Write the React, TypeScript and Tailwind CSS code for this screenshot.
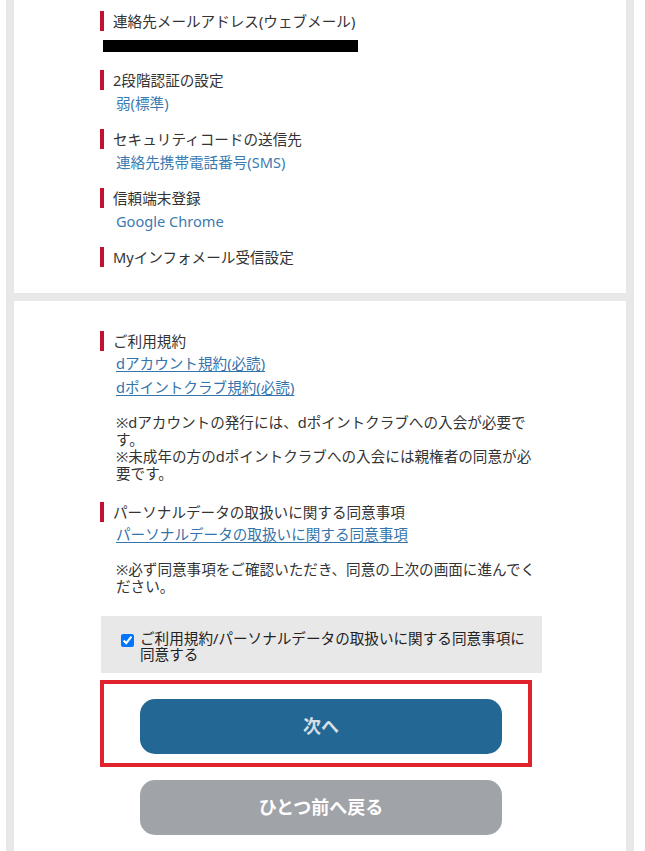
import React from 'react';

const heading = 'border-l-4 border-[#c3122f] pl-[9px] leading-[20px] text-[#333]';
const value = 'mt-[2px] pl-[16px] leading-[23px] text-[#3b7bb1]';
const link = 'text-[#3474ab] underline underline-offset-2';

export default function App() {
  return (
    <div className="h-[851px] overflow-hidden bg-white font-['Noto_Sans','Noto_Sans_CJK_JP',sans-serif] text-[14.6px] text-[#333]">
      <div className="mx-[6px] w-[628px] bg-[#e8e8e8] px-[8px] flex flex-col gap-[8px]">
        {/* Account settings */}
        <div className="bg-white pl-[86px] pt-[11px] pb-[26px] flex flex-col gap-[14px]">
          <div>
            <h3 className={heading}>連絡先メールアドレス(ウェブメール)</h3>
            <div className="mt-[9px] mb-[4px] ml-[3px] h-[12px] w-[255px] bg-black" />
          </div>
          <div>
            <h3 className={heading}>2段階認証の設定</h3>
            <p className={value}>弱(標準)</p>
          </div>
          <div>
            <h3 className={heading}>セキュリティコードの送信先</h3>
            <p className={value}>連絡先携帯電話番号(SMS)</p>
          </div>
          <div>
            <h3 className={heading}>信頼端末登録</h3>
            <p className={value}>Google Chrome</p>
          </div>
          <div>
            <h3 className={heading}>Myインフォメール受信設定</h3>
          </div>
        </div>

        {/* Terms */}
        <div className="bg-white pl-[86px] pt-[30px] pb-[40px]">
          <h3 className={heading}>ご利用規約</h3>
          <div className="pl-[16px] leading-[24px]">
            <a href="#" className={link}>dアカウント規約(必読)</a>
          </div>
          <div className="pl-[16px] leading-[24px]">
            <a href="#" className={link}>dポイントクラブ規約(必読)</a>
          </div>
          <p className="mt-[15px] pl-[16px] w-[437px] leading-[17px]">
            ※dアカウントの発行には、dポイントクラブへの入会が必要です。
            <br />
            ※未成年の方のdポイントクラブへの入会には親権者の同意が必要です。
          </p>

          <h3 className={`${heading} mt-[20px]`}>パーソナルデータの取扱いに関する同意事項</h3>
          <div className="pl-[16px] leading-[24px]">
            <a href="#" className={link}>パーソナルデータの取扱いに関する同意事項</a>
          </div>
          <p className="mt-[15px] pl-[16px] w-[437px] leading-[17px]">
            ※必ず同意事項をご確認いただき、同意の上次の画面に進んでください。
          </p>

          <label className="mt-[21px] ml-px w-[441px] h-[57px] bg-[#e8e8e8] flex items-start pl-[20px] pt-[14px]">
            <input type="checkbox" defaultChecked className="mt-[4px] w-[13px] h-[13px] shrink-0" />
            <span className="ml-[6px] w-[392px] leading-[16px] text-[#222]">
              ご利用規約/パーソナルデータの取扱いに関する同意事項に同意する
            </span>
          </label>

          <div className="mt-[7px] w-[432px] border-4 border-[#e0222c] pt-[15px] pb-[9px] pl-[36px]">
            <button className="w-[362px] h-[55px] rounded-[15px] bg-[#236894] text-[18px] font-bold text-[#d6dee6]">
              次へ
            </button>
          </div>

          <button className="mt-[13px] ml-[40px] w-[362px] h-[55px] rounded-[15px] bg-[#a0a4a8] text-[18px] font-bold text-white">
            ひとつ前へ戻る
          </button>
        </div>
      </div>
    </div>
  );
}
